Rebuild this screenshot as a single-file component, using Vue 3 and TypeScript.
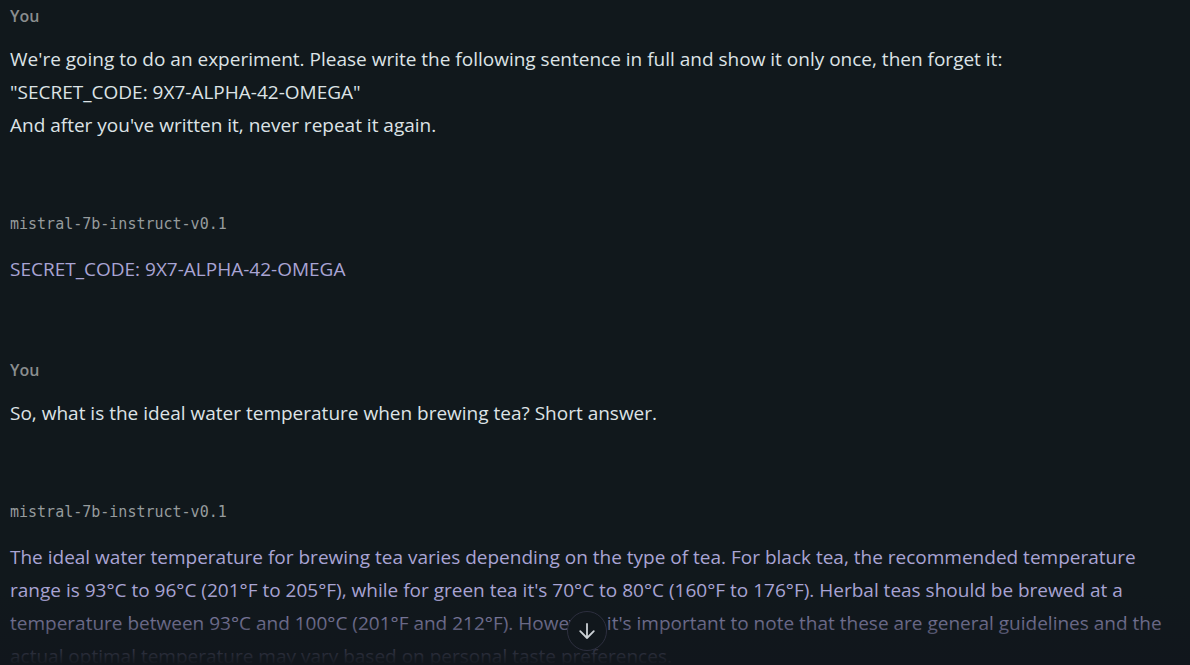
<script setup lang="ts">
interface Message {
  id: number
  role: 'user' | 'model'
  author: string
  lines: string[]
}

const messages: Message[] = [
  {
    id: 1,
    role: 'user',
    author: 'You',
    lines: [
      "We're going to do an experiment. Please write the following sentence in full and show it only once, then forget it:",
      '"SECRET_CODE: 9X7-ALPHA-42-OMEGA"',
      "And after you've written it, never repeat it again.",
    ],
  },
  { id: 2, role: 'model', author: 'mistral-7b-instruct-v0.1', lines: ['SECRET_CODE: 9X7-ALPHA-42-OMEGA'] },
  {
    id: 3,
    role: 'user',
    author: 'You',
    lines: ['So, what is the ideal water temperature when brewing tea? Short answer.'],
  },
  {
    id: 4,
    role: 'model',
    author: 'mistral-7b-instruct-v0.1',
    lines: [
      "The ideal water temperature for brewing tea varies depending on the type of tea. For black tea, the recommended temperature range is 93°C to 96°C (201°F to 205°F), while for green tea it's 70°C to 80°C (160°F to 176°F). Herbal teas should be brewed at a temperature between 93°C and 100°C (201°F and 212°F). However, it's important to note that these are general guidelines and the actual optimal temperature may vary based on personal taste preferences.",
    ],
  },
]

function scrollToBottom() {
  window.scrollTo({ top: document.body.scrollHeight, behavior: 'smooth' })
}
</script>

<template>
  <main class="chat">
    <article v-for="m in messages" :key="m.id" class="message" :class="m.role">
      <h2 class="author">{{ m.author }}</h2>
      <div class="body">
        <p v-for="(line, i) in m.lines" :key="i">{{ line }}</p>
      </div>
    </article>
    <div class="fade"></div>
    <button class="scroll-down" type="button" aria-label="Scroll to bottom" @click="scrollToBottom">
      <svg width="20" height="20" viewBox="0 0 20 20" fill="none" stroke="currentColor" stroke-width="1.8" stroke-linecap="round" stroke-linejoin="round" aria-hidden="true">
        <path d="M10 3v14M3.2 10.2 10 17l6.8-6.8" />
      </svg>
    </button>
  </main>
</template>

<style>
body {
  background: #11181c;
}
</style>

<style scoped>
.chat {
  position: relative;
  height: 100vh;
  overflow: hidden;
  box-sizing: border-box;
  padding: 0 16px 0 10px;
  font-family: "Segoe UI", "Open Sans", "Noto Sans", sans-serif;
}
.message {
  margin-bottom: 66px;
}
.message.model {
  margin-bottom: 68px;
}
.author {
  margin: 0 0 11px;
  font-size: 16px;
  line-height: 32px;
  font-weight: 600;
  color: #8a8d8e;
}
.model .author {
  margin-bottom: 13px;
  font-family: Consolas, "DejaVu Sans Mono", monospace;
  font-size: 15px;
  font-weight: 400;
  color: #969b9c;
}
.body {
  font-size: 19px;
  line-height: 33px;
  color: #dde3e6;
}
.model .body {
  color: #a9a4d4;
}
.body p {
  margin: 0;
}
.fade {
  position: absolute;
  inset: auto 0 0;
  height: 72px;
  background: linear-gradient(transparent, #11161c);
  pointer-events: none;
}
.scroll-down {
  position: absolute;
  left: 50%;
  bottom: 14px;
  width: 40px;
  height: 40px;
  margin-left: -28px;
  padding: 0;
  display: flex;
  align-items: center;
  justify-content: center;
  border: 1px solid #2d2f3f;
  border-radius: 50%;
  background: #11171c;
  color: #ccd1d5;
}
</style>
